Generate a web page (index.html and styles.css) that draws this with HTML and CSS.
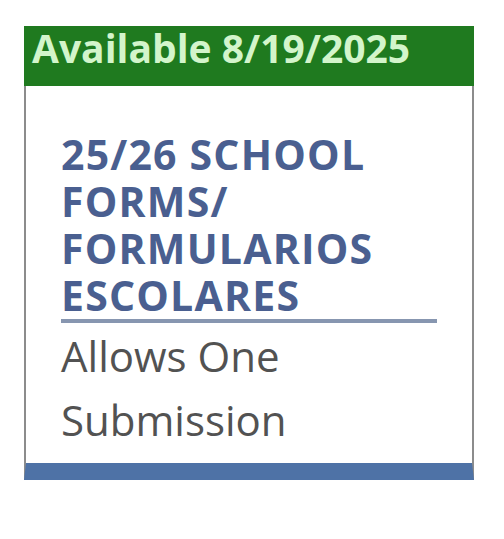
FILE: index.html
```html
<!DOCTYPE html>
<html lang="en">
<head>
<meta charset="utf-8">
<title>School Forms</title>
<link rel="stylesheet" href="styles.css">
</head>
<body>
  <div class="card">
    <div class="card-header">Available 8/19/2025</div>
    <div class="card-body">
      <a class="card-title" href="#">25/26 SCHOOL FORMS/ FORMULARIOS ESCOLARES</a>
      <p class="card-note">Allows One Submission</p>
    </div>
  </div>
</body>
</html>
```

FILE: styles.css
```css
html, body {
  margin: 0;
  padding: 0;
  background: #ffffff;
}

body {
  font-family: "Open Sans", "Noto Sans", sans-serif;
  padding: 26px 0 0 24px;
}

.card {
  width: 446px;
  border-left: 2px solid #8c8c8c;
  border-right: 2px solid #8c8c8c;
  border-bottom: 17px solid #4e72a6;
  background: #ffffff;
}

.card-header {
  background: #1f7a1f;
  color: #d3f5cb;
  font-weight: 700;
  font-size: 39px;
  line-height: 40px;
  padding: 2px 8px 18px;
  margin: 0 -2px;
  white-space: nowrap;
}

.card-body {
  padding: 45px 35px 11px;
}

.card-title {
  display: block;
  color: #4a5f90;
  font-weight: 700;
  font-size: 41px;
  line-height: 47px;
  letter-spacing: 1.2px;
  text-decoration: none;
  border-bottom: 4px solid #8796b0;
}

.card-note {
  margin: 0;
  color: #525252;
  font-size: 42px;
  line-height: 64px;
  padding-top: 1px;
}
```
